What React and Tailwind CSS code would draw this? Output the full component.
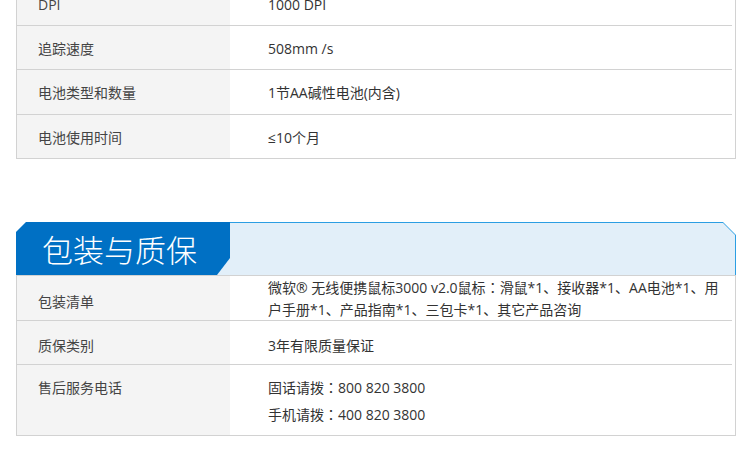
const font = { fontFamily: '"Open Sans", "Noto Sans CJK SC", sans-serif' };

const specRows = [
  { label: 'DPI', value: '1000 DPI', h: 'h-[44px]' },
  { label: '追踪速度', value: '508mm /s', h: 'h-[44px]' },
  { label: '电池类型和数量', value: '1节AA碱性电池(内含)', h: 'h-[45px]' },
];

// centred full-width colon, as in the original page
const Colon = () => <span style={{ fontFamily: '"Noto Sans CJK TC", sans-serif' }}>：</span>;

const Row = ({ label, children, h, last, labelTop, valueTop }) => (
  <div className={`flex ${h} ${last ? '' : 'mr-[3px] border-b border-[#d2d2d2]'}`}>
    <div className={`w-[213px] shrink-0 bg-[#f4f4f4] pl-[21px] text-[#444] flex ${labelTop || 'items-center pt-[1px]'}`}>
      {label}
    </div>
    <div className={`flex-1 pl-[38px] text-[#333] flex ${valueTop || 'items-center pt-[1px]'}`}>
      {children}
    </div>
  </div>
);

const App = () => {
  return (
    <div style={font} className="w-[750px] h-[468px] overflow-hidden bg-white text-[14px]">
      {/* specs table, first row cut off at the top */}
      <div className="ml-[16px] w-[720px] -mt-[18px] border-l border-r border-b border-[#d2d2d2]">
        {specRows.map((r) => (
          <Row key={r.label} label={r.label} h={r.h}>{r.value}</Row>
        ))}
        <Row label="电池使用时间" h="h-[43px]" last>≤10个月</Row>
      </div>

      {/* package & warranty */}
      <div className="ml-[16px] w-[720px] mt-[63px]">
        <div className="flex h-[53px]">
          <div className="w-[214px] shrink-0 bg-[#e2eff9] [clip-path:polygon(10px_0,100%_0,100%_100%,0_100%,0_10px)]">
            <div className="h-full bg-[#0070c4] flex items-center pl-[26px] [clip-path:polygon(0_0,100%_0,100%_calc(100%-17px),calc(100%-13px)_100%,0_100%)]">
              <span className="text-white text-[31px] font-light leading-none" style={{ fontFamily: '"Noto Sans CJK SC", sans-serif' }}>
                包装与质保
              </span>
            </div>
          </div>
          <div className="flex-1 bg-[#2b9ee3] [clip-path:polygon(0_0,calc(100%-13px)_0,100%_13px,100%_100%,0_100%)]">
            <div className="h-full mt-[1px] mr-[1px] bg-[#e2eff9] [clip-path:polygon(0_0,calc(100%-12px)_0,100%_12px,100%_100%,0_100%)]" />
          </div>
        </div>
        <div className="border-l border-r border-b border-t border-[#d2d2d2]">
          <Row label="包装清单" h="h-[45px]" valueTop="items-center leading-[22px]" labelTop="items-center pt-[6px]">
            <div className="whitespace-nowrap">
              微软® 无线便携鼠标3000 v2.0鼠标<Colon />滑鼠*1、接收器*1、AA电池*1、用<br />
              户手册*1、产品指南*1、三包卡*1、其它产品咨询
            </div>
          </Row>
          <Row label="质保类别" h="h-[44px]" labelTop="items-center pt-[6px]" valueTop="items-center pt-[6px]">
            3年有限质量保证
          </Row>
          <Row label="售后服务电话" h="h-[70px]" last labelTop="items-start pt-[10px] leading-[26px]" valueTop="items-start pt-[9px] leading-[26px]">
            <div>
              <div>固话请拨<Colon />800 820 3800</div>
              <div>手机请拨<Colon />400 820 3800</div>
            </div>
          </Row>
        </div>
      </div>
    </div>
  );
};

export default App;
